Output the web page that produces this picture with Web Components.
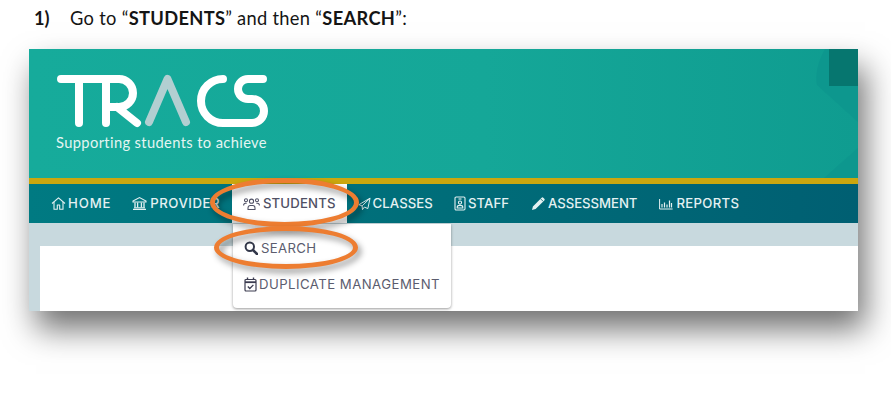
<!DOCTYPE html>
<html lang="en"><head><meta charset="utf-8"><title>TRACS step 1</title>
<style>
html,body{margin:0;background:#fff;}
body{width:891px;height:408px;overflow:hidden;display:flex;flex-direction:column;}
</style></head>
<body>
<doc-step num="1)"><span>Go to “<b>STUDENTS</b>” and then “<b>SEARCH</b>”:</span></doc-step>
<tracs-shot>
  <tracs-header slot="header"></tracs-header>
  <tracs-nav slot="nav">
    <nav-item label="HOME" icon="home" sp=".85" gap="2"></nav-item>
    <nav-item label="PROVIDER" icon="bank" sp=".5" gap="3"></nav-item>
    <nav-item label="STUDENTS" icon="users" sp=".15" gap="3" active>
      <drop-menu>
        <menu-row label="SEARCH" icon="search" sp=".35" gap="3"></menu-row>
        <menu-row label="DUPLICATE MANAGEMENT" icon="cal" sp=".46" gap="2"></menu-row>
      </drop-menu>
    </nav-item>
    <nav-item label="CLASSES" icon="plane" sp=".05" gap="2"></nav-item>
    <nav-item label="STAFF" icon="badge" sp=".05" gap="2"></nav-item>
    <nav-item label="ASSESSMENT" icon="pencil" sp="-.05" gap="3"></nav-item>
    <nav-item label="REPORTS" icon="chart" sp=".3" gap="3"></nav-item>
  </tracs-nav>
  <anno-ellipse style="left:181px;top:129px;width:149px;height:49px"></anno-ellipse>
  <anno-ellipse style="left:185px;top:177px;width:144px;height:43px"></anno-ellipse>
</tracs-shot>
<script>
const ICONS={
home:'<svg viewBox="0 0 15 15" width="15" height="15" fill="none" stroke="currentColor" stroke-width="1.1" stroke-linejoin="round"><path d="M1 7.5 7.5 1.8 14 7.5"/><path d="M3 6v7.2h3.3V9h2.400v4.200H12V6"/></svg>',
bank:'<svg viewBox="0 0 15 15" width="15" height="15" fill="none" stroke="currentColor" stroke-width="1.1"><path d="M1 5 7.500 1.600 14 5V6H1Z"/><path d="M3 6.500v5M5.600 6.500v5M9.400 6.500v5M12 6.500v5" stroke-width="1.300"/><path d="M2 11.800h11M1 13.400h13"/></svg>',
users:'<svg viewBox="0 0 17 14" width="17" height="14" fill="none" stroke="currentColor" stroke-width="1.050"><circle cx="8.500" cy="4.200" r="2.100"/><path d="M5 12.500v-1.600C5 9.400 6 8.400 7.200 8.400h2.600c1.200 0 2.200 1 2.200 2.500v1.600Z"/><circle cx="3" cy="3.200" r="1.500"/><circle cx="14" cy="3.200" r="1.500"/><path d="M.6 8.500c0-1.400.8-2.200 1.900-2.200h1.200M16.400 8.500c0-1.400-.8-2.200-1.900-2.200h-1.200"/></svg>',
plane:'<svg viewBox="0 0 14 15" width="13" height="14" fill="none" stroke="currentColor" stroke-width="1.050" stroke-linejoin="round"><path d="M13 1.200 1 8.200l3.400 1.400L13 1.200 10.600 12.400 6.800 10.800 4.800 13.600 4.400 9.600"/></svg>',
badge:'<svg viewBox="0 0 12 15" width="12" height="15" fill="none" stroke="currentColor" stroke-width="1.100"><rect x="1" y="1" width="10" height="13" rx="1.200"/><path d="M4.500 3h3"/><circle cx="6" cy="6.600" r="1.600"/><path d="M3.200 12v-.8C3.200 10 4.200 9.400 6 9.400s2.800.6 2.800 1.800v.8Z"/></svg>',
pencil:'<svg viewBox="0 0 15 15" width="15" height="15"><path d="M2 14l.9-3.600L11.600 1.700a1.200 1.200 0 0 1 1.700 0l1 1a1.200 1.200 0 0 1 0 1.700L5.600 13.100Z" fill="currentColor"/><path d="M10.600 2.800l2.600 2.600" stroke="#00666f" stroke-width=".8"/></svg>',
chart:'<svg viewBox="0 0 15 12" width="15" height="12" fill="none" stroke="currentColor"><path d="M1.600 1v10h13" stroke-width="1"/><path d="M4 6v3.600M6.500 4.500v5.100M9 6.500v3.100M11.500 2.500v7.100M13.500 5v4.600" stroke-width="1.200"/></svg>',
search:'<svg viewBox="0 0 14 14" width="14" height="14" fill="none" stroke="#33384a"><circle cx="5.800" cy="5.800" r="4.200" stroke-width="2"/><path d="M9 9l4 4" stroke-width="2.600" stroke-linecap="round"/></svg>',
cal:'<svg viewBox="0 0 13 15" width="13" height="15" fill="none" stroke="#3c3c50"><rect x="1" y="2.500" width="11" height="11.500" rx="1" stroke-width="1.200"/><path d="M1 5.200h11" stroke-width="1.800"/><path d="M3.500 .6v2.400M9.500 .6v2.400" stroke-width="1.400"/><path d="M3.800 9.500l2 2 3.600-3.600" stroke-width="1.300"/></svg>'
};
function def(name,css,html){
  customElements.define(name,class extends HTMLElement{
    connectedCallback(){
      if(this.shadowRoot)return;
      const r=this.attachShadow({mode:'open'});
      r.innerHTML='<style>'+css+'</style>'+(typeof html==='function'?html(this):html);
    }
  });
}
def('doc-step',`
  :host{display:flex;flex:none;height:49px;box-sizing:border-box;padding:6px 0 0 34px;font:18.3px/24px Lato,"Open Sans",sans-serif;color:#151515;}
  .n{width:36px;font-weight:700;flex:none}
  ::slotted(span){letter-spacing:.31px}
`,el=>`<div class="n">${el.getAttribute('num')}</div><slot></slot>`);
def('tracs-shot',`
  :host{display:flex;flex-direction:column;flex:none;position:relative;width:829px;height:262px;margin-left:29px;background:#c8d9de;box-shadow:7px 18px 30px rgba(0,0,0,.56);}
  .body{flex:1;display:flex;flex-direction:column;padding:23px 0 0 11px;min-height:0}
  .panel{flex:1;background:#fff;}
`,`<slot name="header"></slot><slot name="nav"></slot><div class="body"><div class="panel"></div></div><slot></slot>`);
def('tracs-header',`
  :host{display:flex;flex:none;flex-direction:column;height:135px;box-sizing:border-box;padding:25px 0 0 27px;position:relative;overflow:hidden;
    background:linear-gradient(90deg,#16ab9b 0%,#15a798 55%,#0f9c90 100%);border-bottom:6px solid #cba70f;}
  svg.logo{display:block;margin-left:1px}
  .tag{font:14.7px/18px Lato,"Open Sans",sans-serif;color:#e4f5f2;margin-top:1px;letter-spacing:.37px;white-space:nowrap}
  .sq{position:absolute;right:0;top:0;width:29px;height:37px;background:#06766f}
  svg.bg{position:absolute;right:0;top:0}
`,`<svg class="bg" width="70" height="129" viewBox="0 0 70 129"><path d="M70 0H37Q26 20 29 36L70 73ZM70 99 36 129H70Z" fill="#0d978e"/></svg><div class="sq"></div>
<svg class="logo" width="215" height="58" viewBox="56 74 215 58" fill="none" stroke="#fff" stroke-width="8" stroke-linecap="round" stroke-linejoin="round" role="img" aria-label="TRACS logo">
<path d="M60 79H118A14 14 0 0 1 118 107H105M78 79V123M105 79V123M116 107 136 123"/>
<path d="M148 122 166.500 79 185 122" stroke="#b2cfd1"/>
<path d="M222 79A22 22 0 0 0 222 123H251A12 12 0 0 0 251 99H247A10 10 0 0 1 247 79H262"/>
</svg><div class="tag">Supporting students to achieve</div>`);
def('tracs-nav',`
  :host{display:flex;flex:none;height:39px;padding-left:12px;background:linear-gradient(90deg,#007a82 0%,#006d79 50%,#005f72 100%);position:relative;}
`,`<slot></slot>`);
def('nav-item',`
  :host{display:flex;align-items:center;position:relative;height:39px;padding:0 11px 0 10px;color:#e4f1f2;font:500 13.2px/39px Inter,"Noto Sans",sans-serif;white-space:nowrap;}
  :host([active]){background:#fff;color:#4f5064;margin:0 1px 0 1px;padding:0 11px;}
  .ic{display:flex}
`,el=>`<span class="ic" style="margin-right:${el.getAttribute('gap')}px">${ICONS[el.getAttribute('icon')]}</span><span style="letter-spacing:${el.getAttribute('sp')}px">${el.getAttribute('label')}</span><slot></slot>`);
def('drop-menu',`
  :host{display:flex;flex-direction:column;position:absolute;left:1px;top:40px;width:218px;height:84px;box-sizing:border-box;padding:6px 0 0 11px;background:#fff;border-radius:0 0 4px 4px;box-shadow:0 1px 3px rgba(0,0,0,.4);z-index:2}
`,`<slot></slot>`);
def('menu-row',`
  :host{display:flex;align-items:center;height:36px;color:#5b5c6e;font:400 13.2px/36px Inter,"Noto Sans",sans-serif;white-space:nowrap}
  .ic{display:flex}
`,el=>`<span class="ic" style="margin-right:${el.getAttribute('gap')}px">${ICONS[el.getAttribute('icon')]}</span><span style="letter-spacing:${el.getAttribute('sp')}px">${el.getAttribute('label')}</span>`);
def('anno-ellipse',`
  :host{display:block;position:absolute;z-index:3;pointer-events:none;border:5px solid #ed7d31;border-radius:50%;box-sizing:border-box;filter:drop-shadow(3px 4px 3px rgba(0,0,0,.42));}
`,``);
</script>
</body></html>
